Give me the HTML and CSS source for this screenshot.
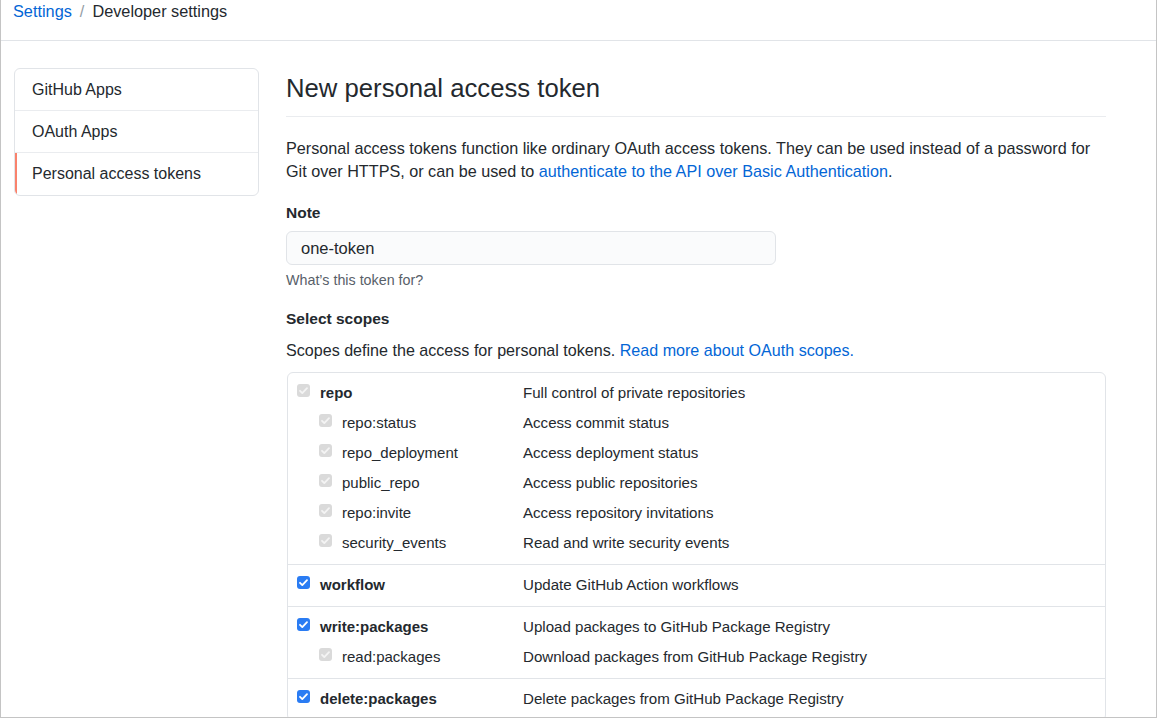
FILE: index.html
```html
<!DOCTYPE html>
<html>
<head>
<meta charset="utf-8">
<link rel="stylesheet" href="styles.css">
</head>
<body>
<div class="frame">
  <header class="header">
    <a class="crumb-link" href="#">Settings</a><span class="crumb-sep">/</span><span class="crumb-cur">Developer settings</span>
  </header>
  <div class="layout">
    <nav class="menu">
      <a class="menu-item" href="#">GitHub Apps</a>
      <a class="menu-item" href="#">OAuth Apps</a>
      <a class="menu-item selected" href="#">Personal access tokens</a>
    </nav>
    <main class="main">
      <h1 class="title">New personal access token</h1>
      <p class="intro">Personal access tokens function like ordinary OAuth access tokens. They can be used instead of a password for Git over HTTPS, or can be used to <a class="link" href="#">authenticate to the API over Basic Authentication</a>.</p>
      <div class="label">Note</div>
      <div class="input">one-token</div>
      <div class="help">What’s this token for?</div>
      <div class="label scopes-label">Select scopes</div>
      <p class="scopes-text">Scopes define the access for personal tokens. <a class="link" href="#">Read more about OAuth scopes.</a></p>
      <div class="scopes">
        <div class="group">
          <div class="row"><span class="name top"><span class="cb dis"><svg viewBox="0 0 13 13"><path d="M3 6.8l2.3 2.3L10 4.2"/></svg></span><b>repo</b></span><span class="desc">Full control of private repositories</span></div>
          <div class="row"><span class="name child"><span class="cb dis"><svg viewBox="0 0 13 13"><path d="M3 6.8l2.3 2.3L10 4.2"/></svg></span>repo:status</span><span class="desc">Access commit status</span></div>
          <div class="row"><span class="name child"><span class="cb dis"><svg viewBox="0 0 13 13"><path d="M3 6.8l2.3 2.3L10 4.2"/></svg></span>repo_deployment</span><span class="desc">Access deployment status</span></div>
          <div class="row"><span class="name child"><span class="cb dis"><svg viewBox="0 0 13 13"><path d="M3 6.8l2.3 2.3L10 4.2"/></svg></span>public_repo</span><span class="desc">Access public repositories</span></div>
          <div class="row"><span class="name child"><span class="cb dis"><svg viewBox="0 0 13 13"><path d="M3 6.8l2.3 2.3L10 4.2"/></svg></span>repo:invite</span><span class="desc">Access repository invitations</span></div>
          <div class="row"><span class="name child"><span class="cb dis"><svg viewBox="0 0 13 13"><path d="M3 6.8l2.3 2.3L10 4.2"/></svg></span>security_events</span><span class="desc">Read and write security events</span></div>
        </div>
        <div class="group">
          <div class="row"><span class="name top"><span class="cb on"><svg viewBox="0 0 13 13"><path d="M3 6.8l2.3 2.3L10 4.2"/></svg></span><b>workflow</b></span><span class="desc">Update GitHub Action workflows</span></div>
        </div>
        <div class="group">
          <div class="row"><span class="name top"><span class="cb on"><svg viewBox="0 0 13 13"><path d="M3 6.8l2.3 2.3L10 4.2"/></svg></span><b>write:packages</b></span><span class="desc">Upload packages to GitHub Package Registry</span></div>
          <div class="row"><span class="name child"><span class="cb dis"><svg viewBox="0 0 13 13"><path d="M3 6.8l2.3 2.3L10 4.2"/></svg></span>read:packages</span><span class="desc">Download packages from GitHub Package Registry</span></div>
        </div>
        <div class="group">
          <div class="row"><span class="name top"><span class="cb on"><svg viewBox="0 0 13 13"><path d="M3 6.8l2.3 2.3L10 4.2"/></svg></span><b>delete:packages</b></span><span class="desc">Delete packages from GitHub Package Registry</span></div>
        </div>
      </div>
    </main>
  </div>
</div>
</body>
</html>
```

FILE: styles.css
```css
html, body {
  margin: 0;
  padding: 0;
  background: #ffffff;
}
body {
  font-family: "Liberation Sans", Arial, sans-serif;
  color: #24292e;
  font-size: 15px;
}
.frame {
  box-sizing: border-box;
  width: 1157px;
  height: 718px;
  border-left: 1px solid #c4c4c4;
  border-right: 1px solid #c4c4c4;
  border-bottom: 1px solid #c4c4c4;
  overflow: hidden;
}
.header {
  height: 40px;
  border-bottom: 1px solid #e1e4e8;
  padding-left: 12px;
  font-size: 16.3px;
  line-height: 22px;
}
.crumb-link {
  color: #0366d6;
  text-decoration: none;
}
.crumb-sep {
  color: #959da5;
  margin: 0 8px 0 8px;
}
.crumb-cur {
  color: #24292e;
}
.layout {
  display: flex;
  padding: 27px 0 0 13px;
  gap: 27px;
}
.menu {
  width: 245px;
  box-sizing: border-box;
  border: 1px solid #e1e4e8;
  border-radius: 6px;
  align-self: flex-start;
  overflow: hidden;
}
.menu-item {
  display: block;
  height: 42px;
  line-height: 42px;
  box-sizing: border-box;
  padding-left: 17px;
  font-size: 16px;
  color: #24292e;
  text-decoration: none;
  border-bottom: 1px solid #eaecef;
}
.menu-item:last-child {
  border-bottom: none;
}
.menu-item.selected {
  border-left: 2px solid #f9826c;
  padding-left: 15px;
}
.main {
  width: 820px;
}
.title {
  margin: 0;
  padding: 2px 0 10px;
  font-size: 25.7px;
  line-height: 36px;
  font-weight: 400;
  border-bottom: 1px solid #eaecef;
}
.intro {
  margin: 20px 0 0;
  line-height: 23px;
  font-size: 16.2px;
}
.link {
  color: #0366d6;
  text-decoration: none;
}
.label {
  margin-top: 19px;
  font-weight: 700;
  font-size: 15.5px;
  line-height: 22px;
}
.input {
  box-sizing: border-box;
  margin-top: 7px;
  width: 490px;
  height: 34px;
  border: 1px solid #e1e4e8;
  border-radius: 6px;
  background: #fafbfc;
  padding-left: 14px;
  font-size: 16.5px;
  line-height: 32px;
}
.help {
  margin-top: 6px;
  font-size: 14.3px;
  line-height: 18px;
  color: #586069;
}
.scopes-text {
  margin: 9px 0 0;
  line-height: 22px;
  font-size: 16.1px;
}
.scopes {
  margin-top: 11px;
  margin-left: 1px;
  width: 819px;
  box-sizing: border-box;
  border: 1px solid #e1e4e8;
  border-radius: 6px;
}
.group {
  padding: 4px 0 7px 9px;
  border-top: 1px solid #e1e4e8;
}
.group:first-child {
  border-top: none;
}
.row {
  display: grid;
  grid-template-columns: 226px 1fr;
  height: 30px;
  align-items: center;
}
.name {
  display: flex;
  align-items: center;
  gap: 10px;
}
.name.child {
  padding-left: 22px;
}
.name b {
  font-weight: 700;
}
.desc {
  color: #24292e;
  font-size: 15.1px;
}
.cb {
  width: 13px;
  height: 13px;
  border-radius: 3px;
  box-sizing: border-box;
  display: inline-flex;
  position: relative;
  top: -2px;
}
.cb svg {
  width: 13px;
  height: 13px;
}
.cb path {
  fill: none;
  stroke: #ffffff;
  stroke-width: 1.8;
  stroke-linecap: round;
  stroke-linejoin: round;
}
.cb.dis {
  background: #dadada;
}
.cb.dis path {
  stroke: #f4f4f4;
}
.cb.on {
  background: #2a7cf3;
}
```
